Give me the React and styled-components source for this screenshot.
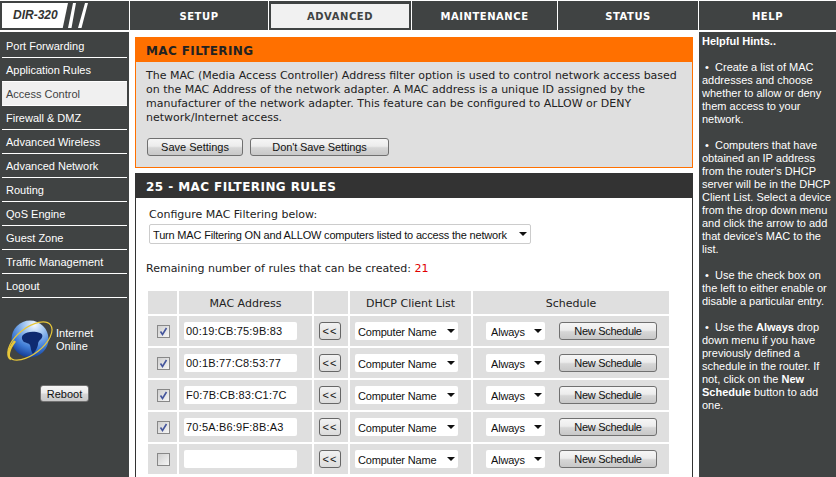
import React from "react";
import styled, { createGlobalStyle } from "styled-components";

const GlobalStyle = createGlobalStyle`
  html, body {
    margin: 0;
    padding: 0;
    background: #fff;
    overflow: hidden;
  }
  body {
    font-family: "DejaVu Sans", sans-serif;
    font-size: 11px;
    color: #222;
  }
`;

const Page = styled.div`
  width: 836px;
  height: 477px;
  overflow: hidden;
  display: grid;
  grid-template-columns: 130px 568px 138px;
  grid-template-rows: 31px 445px;
  padding-top: 1px;
  box-sizing: border-box;
`;

const Header = styled.div`
  grid-column: 1 / 4;
  display: grid;
  grid-template-columns: 129px 138px 142px 145px 140px 137px;
  column-gap: 1px;
  margin-bottom: 2px;
`;

const LogoCell = styled.div`
  background: #404343;
  display: flex;
  align-items: center;
  padding-left: 2px;
`;

const LogoBadge = styled.div`
  width: 66px;
  height: 25px;
  background: #fff;
  clip-path: polygon(0 0, 100% 0, 92% 100%, 0 100%);
  font: italic bold 12px "Liberation Sans", sans-serif;
  color: #333;
  line-height: 25px;
  padding-left: 11px;
  box-sizing: border-box;
`;

const Tab = styled.div`
  display: flex;
  align-items: center;
  justify-content: center;
  box-sizing: border-box;
  padding-top: ${(p) => (p.$active ? 0 : 2)}px;
  background: #404343;
  color: #fff;
  font: bold 10px "DejaVu Sans", sans-serif;
  letter-spacing: 0.55px;
  ${(p) =>
    p.$active &&
    `
    background: #f1f1f1;
    color: #404343;
    border-style: solid;
    border-color: #404343;
    border-width: 3px 2px 2px;
  `}
`;

const Sidebar = styled.nav`
  background: #404343;
  padding: 2px 2px 0;
  display: flex;
  flex-direction: column;
  margin-right: 1px;
`;

const NavItem = styled.div`
  height: 24px;
  box-sizing: border-box;
  padding: 1px 0 0 4px;
  color: ${(p) => (p.$active ? "#404343" : "#fff")};
  background: ${(p) => (p.$active ? "#f0f0f0" : "transparent")};
  border-bottom: 1px solid #fff;
  font: 11px/22px "Liberation Sans", sans-serif;
`;

const Status = styled.div`
  display: flex;
  align-items: center;
  gap: 1px;
  margin: 20px 0 0 4px;
  color: #fff;
  font: 11px/13px "Liberation Sans", sans-serif;
`;

const RebootRow = styled.div`
  display: flex;
  justify-content: center;
  margin-top: 23px;
`;

const Main = styled.main`
  padding: 5px 5px 0 5px;
  min-width: 0;
  display: flex;
  flex-direction: column;
  gap: 5px;
`;

const Notice = styled.section`
  height: 131px;
  box-sizing: border-box;
  border: 1px solid #ff7000;
  background: #dfdfdf;
`;

const NoticeTitle = styled.h1`
  margin: 0;
  height: 24px;
  padding-left: 10px;
  background: #ff7000;
  color: #222;
  font: bold 12px/27px "DejaVu Sans", sans-serif;
  letter-spacing: 0.38px;
`;

const NoticeText = styled.p`
  margin: 7px 10px 0;
  font: 11px/14px "DejaVu Sans", sans-serif;
`;

const ButtonRow = styled.div`
  display: flex;
  gap: 7px;
  margin: 13px 11px 0;
`;

const Button = styled.button`
  height: ${(p) => p.$h || 18}px;
  width: ${(p) => p.$w}px;
  padding: 0;
  border: 1px solid #707070;
  border-radius: 3px;
  background: linear-gradient(#f6f6f6 0%, #ececec 45%, #d6d6d6 55%, #c8c8c8 100%);
  color: #111;
  font: 11px "Liberation Sans", sans-serif;
  letter-spacing: ${(p) => p.$spacing || 0}px;
`;

const Rules = styled.section`
  flex: 1;
  border-left: 1px solid #333;
  border-right: 1px solid #333;
`;

const RulesTitle = styled.h2`
  margin: 0 -1px;
  height: 25px;
  padding-left: 11px;
  background: #333;
  color: #fff;
  font: bold 12px/29px "DejaVu Sans", sans-serif;
  letter-spacing: 0.42px;
`;

const Label = styled.div`
  margin: 10px 0 0 13px;
  font: 11px/14px "DejaVu Sans", sans-serif;
`;

const SelectBox = styled.label`
  position: relative;
  display: ${(p) => (p.$block ? "block" : "inline-block")};
  width: ${(p) => p.$w}px;
  height: 18px;
  margin: ${(p) => p.$m || 0};
  background: #fff;
  border: ${(p) => (p.$border ? "1px solid #ccc" : "none")};
  border-radius: 2px;
  &::after {
    content: "";
    position: absolute;
    right: 3px;
    top: 7px;
    border-style: solid;
    border-width: 4px 4px 0;
    border-color: #111 transparent transparent;
  }
`;

const Select = styled.select`
  appearance: none;
  width: 100%;
  height: 100%;
  border: 0;
  padding: 1px 0 0 ${(p) => p.$pad}px;
  background: transparent;
  color: #111;
  font: 11px "Liberation Sans", sans-serif;
  letter-spacing: -0.18px;
`;

const Remaining = styled.div`
  margin: 18px 0 0 10px;
  font: 11px/14px "DejaVu Sans", sans-serif;
  span {
    color: #e00000;
  }
`;

const RuleTable = styled.div`
  display: grid;
  grid-template-columns: 29px 133px 34px 121px 196px;
  grid-template-rows: 23px;
  grid-auto-rows: 30px;
  gap: 2px;
  margin: 15px 0 0 12px;
`;

const HeadCell = styled.div`
  background: #dfdfdf;
  font: 11px/25px "DejaVu Sans", sans-serif;
  text-align: center;
`;

const Cell = styled.div`
  background: #dfdfdf;
  display: flex;
  align-items: center;
  justify-content: ${(p) => p.$justify || "center"};
  padding: ${(p) => p.$pad || 0};
`;

const CheckBox = styled.span`
  width: 11px;
  height: 11px;
  border: 1px solid #888;
  background: linear-gradient(135deg, #cfcfcf, #f6f6f6);
  display: flex;
  align-items: center;
  justify-content: center;
`;

const MacInput = styled.input`
  width: 113px;
  height: 18px;
  box-sizing: border-box;
  border: 0;
  border-radius: 2px;
  padding: 0 2px;
  background: #fff;
  color: #111;
  font: 11px "Liberation Sans", sans-serif;
  letter-spacing: 0.2px;
`;

const ArrowButton = styled.button`
  width: 22px;
  height: 18px;
  padding: 0;
  border: 1px solid #666;
  border-radius: 3px;
  background: linear-gradient(#f2f2f2, #dcdcdc);
  color: #111;
  font: 11px "Liberation Sans", sans-serif;
  letter-spacing: 1px;
`;

const Help = styled.aside`
  background: #404343;
  color: #fff;
  margin-left: 1px;
  padding: 3px 2px 0 3px;
  font: 11px/13px "Liberation Sans", sans-serif;
  p {
    margin: 0 0 13px;
  }
  strong {
    font-weight: bold;
  }
`;

const navItems = [
  "Port Forwarding",
  "Application Rules",
  "Access Control",
  "Firewall & DMZ",
  "Advanced Wireless",
  "Advanced Network",
  "Routing",
  "QoS Engine",
  "Guest Zone",
  "Traffic Management",
  "Logout",
];

const macs = [
  "00:19:CB:75:9B:83",
  "00:1B:77:C8:53:77",
  "F0:7B:CB:83:C1:7C",
  "70:5A:B6:9F:8B:A3",
  "",
];

function Globe() {
  return (
    <svg width="49" height="44" viewBox="0 0 49 44">
      <defs>
        <radialGradient id="globeFill" cx="62%" cy="12%" r="90%">
          <stop offset="0%" stopColor="#f4f8ff" />
          <stop offset="30%" stopColor="#a4c8f2" />
          <stop offset="70%" stopColor="#3f7cd6" />
          <stop offset="100%" stopColor="#143c94" />
        </radialGradient>
      </defs>
      <circle cx="24" cy="21" r="18.5" fill="url(#globeFill)" />
      <path d="M17 17c4-4 12-4 17-2 3 1 3 4 1 6-2 2-3 3-3 5 0 3-3 8-5 10-2-2-2-6-3-9-1-2-4-2-6-3-2-2-3-5-1-7z" fill="#0e2a70" />
      <ellipse cx="24" cy="23" rx="26" ry="13" transform="rotate(-38 24 23)" fill="none" stroke="#e6c63a" strokeWidth="1.2" />
      <path d="M5 41C1 39 2 32 9 23" fill="none" stroke="#e6c63a" strokeWidth="2.6" />
    </svg>
  );
}

function Check() {
  return (
    <svg width="9" height="9" viewBox="0 0 9 9">
      <path d="M1.5 4.5 3.5 7.5 7.5 1" fill="none" stroke="#44559c" strokeWidth="1.6" />
    </svg>
  );
}

function DropSelect({ value, width, margin, block, border, pad = 3 }) {
  return (
    <SelectBox $w={width} $m={margin} $block={block} $border={border}>
      <Select $pad={pad} defaultValue={value}>
        <option>{value}</option>
      </Select>
    </SelectBox>
  );
}

export default function App() {
  return (
    <Page>
      <GlobalStyle />
      <Header>
        <LogoCell>
          <LogoBadge>DIR-320</LogoBadge>
          <svg width="22" height="25" viewBox="0 0 22 25">
            <path d="M0 25 5 0h3L3.500 25zM10 25 17 0h3L13.500 25z" fill="#fff" />
          </svg>
        </LogoCell>
        <Tab>SETUP</Tab>
        <Tab $active>ADVANCED</Tab>
        <Tab>MAINTENANCE</Tab>
        <Tab>STATUS</Tab>
        <Tab>HELP</Tab>
      </Header>

      <Sidebar>
        {navItems.map((item) => (
          <NavItem key={item} $active={item === "Access Control"}>
            {item}
          </NavItem>
        ))}
        <Status>
          <Globe />
          <div>
            Internet
            <br />
            Online
          </div>
        </Status>
        <RebootRow>
          <Button $w={49} $h={17}>Reboot</Button>
        </RebootRow>
      </Sidebar>

      <Main>
        <Notice>
          <NoticeTitle>MAC FILTERING</NoticeTitle>
          <NoticeText>
            The MAC (Media Access Controller) Address filter option is used to control network access based
            on the MAC Address of the network adapter. A MAC address is a unique ID assigned by the
            manufacturer of the network adapter. This feature can be configured to ALLOW or DENY
            network/Internet access.
          </NoticeText>
          <ButtonRow>
            <Button $w={96}>Save Settings</Button>
            <Button $w={139} $spacing={-0.1}>Don't Save Settings</Button>
          </ButtonRow>
        </Notice>

        <Rules>
          <RulesTitle>25 - MAC FILTERING RULES</RulesTitle>
          <Label>Configure MAC Filtering below:</Label>
          <DropSelect
            block
            border
            width={380}
            margin="2px 0 0 13px"
            value="Turn MAC Filtering ON and ALLOW computers listed to access the network"
          />
          <Remaining>
            Remaining number of rules that can be created: <span>21</span>
          </Remaining>
          <RuleTable>
            <HeadCell />
            <HeadCell>MAC Address</HeadCell>
            <HeadCell />
            <HeadCell>DHCP Client List</HeadCell>
            <HeadCell>Schedule</HeadCell>
            {macs.map((mac, i) => (
              <React.Fragment key={i}>
                <Cell $pad="0 0 0 1px">
                  <CheckBox>{mac && <Check />}</CheckBox>
                </Cell>
                <Cell $justify="flex-start" $pad="0 0 0 5px">
                  <MacInput defaultValue={mac} />
                </Cell>
                <Cell $pad="0 2px 0 0">
                  <ArrowButton>&lt;&lt;</ArrowButton>
                </Cell>
                <Cell $justify="flex-start" $pad="0 0 0 5px">
                  <DropSelect width={103} value="Computer Name" />
                </Cell>
                <Cell $justify="space-between" $pad="0 12px 0 13px">
                  <DropSelect width={59} pad={5} value="Always" />
                  <Button $w={98} $spacing={-0.3}>New Schedule</Button>
                </Cell>
              </React.Fragment>
            ))}
          </RuleTable>
        </Rules>
      </Main>

      <Help>
        <p><strong>Helpful Hints..</strong></p>
        <p>&nbsp;•&nbsp; Create a list of MAC addresses and choose whether to allow or deny them access to your network.</p>
        <p>&nbsp;•&nbsp; Computers that have obtained an IP address from the router's DHCP server will be in the DHCP Client List. Select a device from the drop down menu and click the arrow to add that device's MAC to the list.</p>
        <p>&nbsp;•&nbsp; Use the check box on the left to either enable or disable a particular entry.</p>
        <p>&nbsp;•&nbsp; Use the <strong>Always</strong> drop down menu if you have previously defined a schedule in the router. If not, click on the <strong>New Schedule</strong> button to add one.</p>
      </Help>
    </Page>
  );
}
